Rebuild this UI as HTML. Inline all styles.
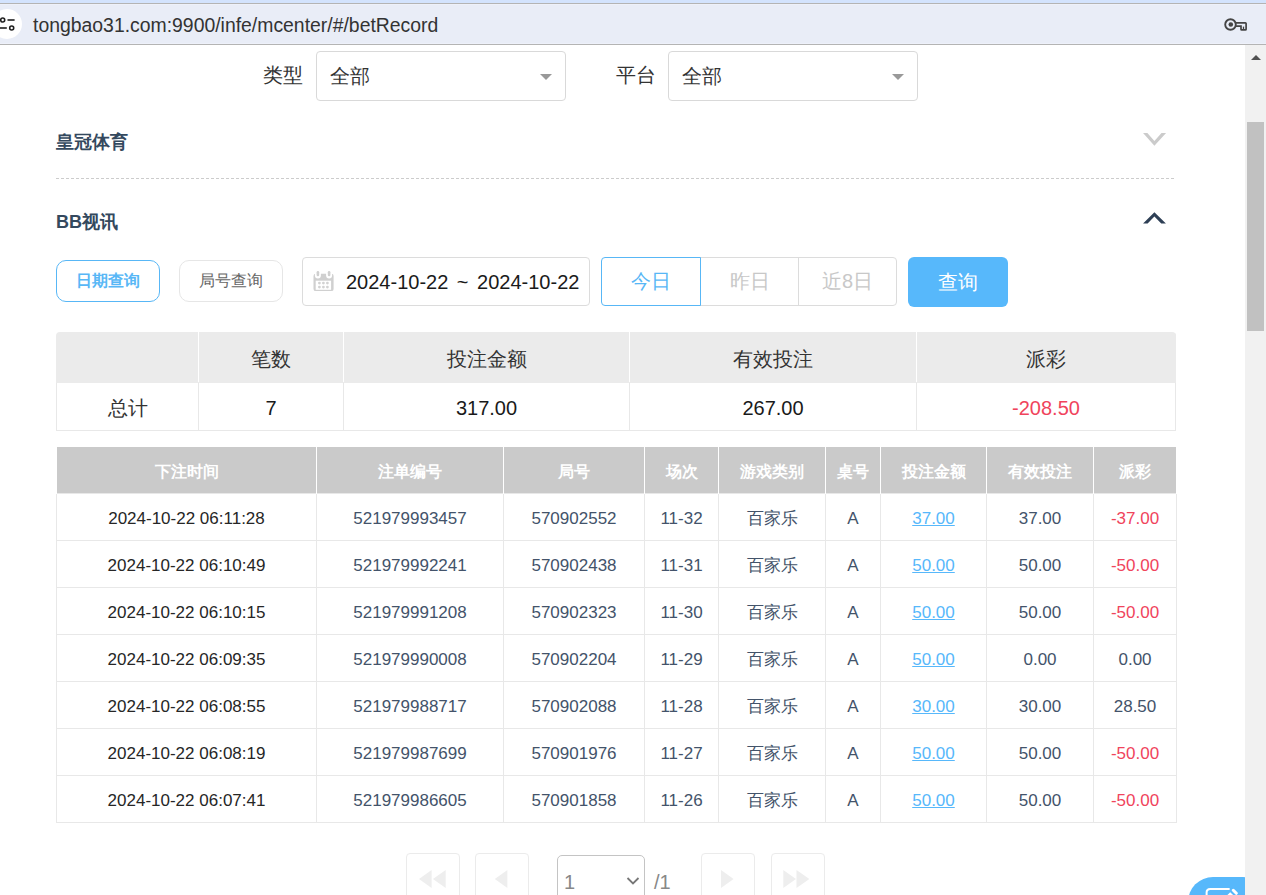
<!DOCTYPE html>
<html><head><meta charset="utf-8">
<style>
*{margin:0;padding:0;box-sizing:border-box}
html,body{width:1266px;height:895px;overflow:hidden;background:#fff;font-family:"Liberation Sans",sans-serif}
.abs{position:absolute}
#topstrip{left:0;top:0;width:1266px;height:3px;background:#d3e3fd}
#bar{left:0;top:3px;width:1266px;height:42px;background:#e9edf7;border-top:1px solid #b4b4b4;border-bottom:1px solid #b4b4b4}
#bar:before{content:"";position:absolute;left:0;right:0;top:0;height:1px;background:#eef1fa}
#bar:after{content:"";position:absolute;left:0;right:0;bottom:0;height:1px;background:#eef1fa}
#url{left:33px;top:13px;font-size:19.4px;color:#333;white-space:nowrap;line-height:24px}
#sb{left:1245px;top:45px;width:21px;height:850px;background:#f1f1f1}
#thumb{left:1247px;top:122px;width:17px;height:209px;background:#c1c1c1}
.lbl{font-size:20px;color:#333;line-height:24px;white-space:nowrap}
.sel{border:1px solid #d9d9d9;border-radius:4px;width:250px;height:50px;background:#fff}
.sel span{position:absolute;left:13px;top:12px;font-size:20px;color:#333;line-height:24px}
.sel i{position:absolute;left:223px;top:22px;width:0;height:0;border-left:6px solid transparent;border-right:6px solid transparent;border-top:6px solid #999}
.title{font-size:18px;font-weight:bold;color:#34495e;line-height:24px;white-space:nowrap}
#dash{left:56px;top:178px;width:1120px;height:1px;background:repeating-linear-gradient(to right,#ccc 0 3px,transparent 3px 5px)}
.btn{border-radius:10px;height:42px;text-align:center;font-size:16px;line-height:40px;white-space:nowrap}
#inp{left:302px;top:257px;width:288px;height:49px;border:1px solid #dcdcdc;border-radius:4px}
#inp span{position:absolute;left:43px;top:12px;font-size:20px;color:#1a1a1a;line-height:24px;white-space:nowrap;word-spacing:3px}
.seg{top:257px;height:49px;border:1px solid #dcdcdc;font-size:20px;color:#c8c8c8;text-align:center;line-height:47px}
#qbtn{left:908px;top:257px;width:100px;height:50px;background:#57b8fb;border-radius:6px;color:#fff;font-size:20px;text-align:center;line-height:50px}
table{border-collapse:collapse;position:absolute}
#sumw{left:56px;top:332px;width:1120px;height:99px;border-radius:4px 4px 0 0;overflow:hidden}
#sum{left:0;top:0;width:1120px}
#sum td{border:1px solid #e8e8e8;text-align:center;font-size:20px;color:#1a1a1a;height:48px}
#sum tr.h td{background:#ebebeb;border-color:#ebebeb #fff #ebebeb #fff;color:#333;height:50px;padding-top:4px}
#sum tr.h td:first-child{border-left-color:#ebebeb}#sum tr.h td:last-child{border-right-color:#ebebeb}
#sum tr.b td{padding-top:3px}
#det{left:56px;top:447px;width:1120px;table-layout:fixed}
#det th{background:#cacaca;color:#fff;font-weight:bold;font-size:16px;height:46px;padding-top:6px;border-left:1px solid #fff;border-right:1px solid #fff}
#det td{border:1px solid #e8e8e8;text-align:center;font-size:17px;color:#43536a;height:47px;padding-top:4px}
#det td.t{color:#262626}
#det td.u{color:#57b8fb;text-decoration:underline}
#det td.r{color:#f0445c}
.pg{top:853px;width:54px;height:60px;border:1px solid #ebebeb;border-radius:4px}
</style></head><body>
<div id="topstrip" class="abs"></div>
<div id="bar" class="abs"></div>
<div class="abs" style="left:-8px;top:8.8px;width:30px;height:30px;border-radius:50%;background:#fff"></div>
<svg class="abs" style="left:0;top:14px" width="20" height="20" viewBox="0 0 20 20">
 <circle cx="2.7" cy="6" r="2" fill="none" stroke="#1f1f1f" stroke-width="1.6"/>
 <line x1="7.5" y1="6" x2="14.6" y2="6" stroke="#1f1f1f" stroke-width="1.6"/>
 <line x1="-1" y1="14" x2="6.8" y2="14" stroke="#1f1f1f" stroke-width="1.6"/>
 <circle cx="11.7" cy="14" r="2" fill="none" stroke="#1f1f1f" stroke-width="1.6"/>
</svg>
<div id="url" class="abs">tongbao31.com:9900/infe/mcenter/#/betRecord</div>
<svg class="abs" style="left:1220px;top:14px" width="32" height="22" viewBox="0 0 32 22">
 <circle cx="10.5" cy="10.5" r="5.3" fill="none" stroke="#444" stroke-width="1.9"/>
 <circle cx="10.8" cy="10.5" r="2.3" fill="#444"/>
 <path d="M15.3 8.9 H25.4 Q26.1 8.9 26.1 9.6 V15.2 Q26.1 15.9 25.4 15.9 H21.7 Q21 15.9 21 15.2 V12.2 H15.3" fill="none" stroke="#444" stroke-width="1.7"/>
 <path d="M23.5 12.6 V15.5" stroke="#444" stroke-width="1.3"/>
</svg>
<div id="sb" class="abs"></div>
<div class="abs" style="left:1251px;top:55px;width:0;height:0;border-left:5px solid transparent;border-right:5px solid transparent;border-bottom:5px solid #505050"></div>
<div id="thumb" class="abs"></div>

<div class="abs lbl" style="left:263px;top:63px">类型</div>
<div class="abs sel" style="left:316px;top:51px"><span>全部</span><i></i></div>
<div class="abs lbl" style="left:616px;top:63px">平台</div>
<div class="abs sel" style="left:668px;top:51px"><span>全部</span><i></i></div>

<div class="abs title" style="left:56px;top:130px">皇冠体育</div>
<svg class="abs" style="left:1138px;top:128px" width="32" height="22" viewBox="0 0 32 22"><polygon points="5.06,5.06 9.35,5.06 16.4,12.9 23.5,5.06 28.06,5.06 16.4,17.7" fill="#cbcbcb"/></svg>
<div id="dash" class="abs"></div>
<div class="abs title" style="left:56px;top:210px">BB视讯</div>
<svg class="abs" style="left:1138px;top:206px" width="32" height="22" viewBox="0 0 32 22"><polygon points="5.06,17.57 16.4,6.2 27.9,17.57 23.25,17.57 16.4,10.5 9.6,17.57" fill="#2e3f55"/></svg>

<div class="abs btn" style="left:56px;top:260px;width:104px;border:1.5px solid #58b7f6;color:#58b7f6;font-weight:bold">日期查询</div>
<div class="abs btn" style="left:179px;top:260px;width:104px;border:1px solid #e6e6e6;color:#666">局号查询</div>
<div id="inp" class="abs">
 <svg class="abs" style="left:5px;top:8px" width="32" height="30" viewBox="0 0 32 30">
  <rect x="5.5" y="7.7" width="20.1" height="17.4" rx="2.2" fill="#d0d0d0"/>
  <rect x="7.7" y="14.7" width="15.4" height="9.1" fill="#fff"/>
  <g fill="#d2d2d2"><circle cx="11.4" cy="17.1" r="1.4"/><circle cx="15.4" cy="17.1" r="1.4"/><circle cx="19.4" cy="17.1" r="1.4"/><circle cx="11.4" cy="21.1" r="1.4"/><circle cx="15.4" cy="21.1" r="1.4"/><circle cx="19.4" cy="21.1" r="1.4"/></g>
  <rect x="6.9" y="3" width="6" height="9.5" rx="3" fill="#fff"/>
  <rect x="18.1" y="3" width="6" height="9.5" rx="3" fill="#fff"/>
  <rect x="8.6" y="5" width="2.6" height="5.3" rx="1.3" fill="#d0d0d0"/>
  <rect x="19.8" y="5" width="2.6" height="5.3" rx="1.3" fill="#d0d0d0"/>
 </svg>
 <span>2024-10-22 ~ 2024-10-22</span>
</div>
<div class="abs seg" style="left:700px;width:99px;border-right:none">昨日</div>
<div class="abs seg" style="left:798px;width:99px;border-radius:0 4px 4px 0">近8日</div>
<div class="abs seg" style="left:601px;width:100px;border:1px solid #58b7f6;color:#58b7f6;border-radius:4px 0 0 4px">今日</div>
<div id="qbtn" class="abs">查询</div>

<div id="sumw" class="abs"><table id="sum">
 <colgroup><col style="width:142px"><col style="width:145px"><col style="width:286px"><col style="width:287px"><col></colgroup>
 <tr class="h"><td></td><td>笔数</td><td>投注金额</td><td>有效投注</td><td>派彩</td></tr>
 <tr class="b"><td style="color:#333">总计</td><td>7</td><td>317.00</td><td>267.00</td><td style="color:#f0445c">-208.50</td></tr>
</table></div>

<table id="det">
 <colgroup><col style="width:260px"><col style="width:187px"><col style="width:141px"><col style="width:74px"><col style="width:107px"><col style="width:55px"><col style="width:106px"><col style="width:107px"><col style="width:83px"></colgroup>
 <tr><th>下注时间</th><th>注单编号</th><th>局号</th><th>场次</th><th>游戏类别</th><th>桌号</th><th>投注金额</th><th>有效投注</th><th>派彩</th></tr>
 <tr><td class="t">2024-10-22 06:11:28</td><td>521979993457</td><td>570902552</td><td>11-32</td><td>百家乐</td><td>A</td><td class="u">37.00</td><td>37.00</td><td class="r">-37.00</td></tr>
 <tr><td class="t">2024-10-22 06:10:49</td><td>521979992241</td><td>570902438</td><td>11-31</td><td>百家乐</td><td>A</td><td class="u">50.00</td><td>50.00</td><td class="r">-50.00</td></tr>
 <tr><td class="t">2024-10-22 06:10:15</td><td>521979991208</td><td>570902323</td><td>11-30</td><td>百家乐</td><td>A</td><td class="u">50.00</td><td>50.00</td><td class="r">-50.00</td></tr>
 <tr><td class="t">2024-10-22 06:09:35</td><td>521979990008</td><td>570902204</td><td>11-29</td><td>百家乐</td><td>A</td><td class="u">50.00</td><td>0.00</td><td>0.00</td></tr>
 <tr><td class="t">2024-10-22 06:08:55</td><td>521979988717</td><td>570902088</td><td>11-28</td><td>百家乐</td><td>A</td><td class="u">30.00</td><td>30.00</td><td>28.50</td></tr>
 <tr><td class="t">2024-10-22 06:08:19</td><td>521979987699</td><td>570901976</td><td>11-27</td><td>百家乐</td><td>A</td><td class="u">50.00</td><td>50.00</td><td class="r">-50.00</td></tr>
 <tr><td class="t">2024-10-22 06:07:41</td><td>521979986605</td><td>570901858</td><td>11-26</td><td>百家乐</td><td>A</td><td class="u">50.00</td><td>50.00</td><td class="r">-50.00</td></tr>
</table>

<div class="abs pg" style="left:406px"></div>
<div class="abs pg" style="left:475px"></div>
<div class="abs pg" style="left:701px"></div>
<div class="abs pg" style="left:771px"></div>
<div class="abs" style="left:557px;top:855px;width:88px;height:60px;border:1px solid #c4c4c4;border-radius:5px"></div>
<div class="abs" style="left:564px;top:870px;font-size:20px;color:#888;line-height:24px">1</div>
<svg class="abs" style="left:626px;top:876px" width="14" height="10" viewBox="0 0 14 10"><path d="M1.5 2 L7 7.5 L12.5 2" fill="none" stroke="#777" stroke-width="1.8"/></svg>
<div class="abs" style="left:654px;top:870px;font-size:20px;color:#888;line-height:24px">/1</div>
<svg class="abs" style="left:406px;top:853px" width="420" height="42" viewBox="0 0 420 42">
 <g fill="#eee">
  <path d="M13 26 L25.6 17 V35 Z"/><path d="M26.9 26 L39.7 17 V35 Z"/>
  <path d="M88.8 26 L101.4 17 V35 Z"/>
  <path d="M315 17 V35 L327.6 26 Z"/>
  <path d="M377.3 17 V35 L390 26 Z"/><path d="M390.5 17 V35 L403.4 26 Z"/>
 </g>
</svg>
<div class="abs" style="left:1188px;top:877px;width:80px;height:50px;border-radius:25px;background:#57b8fb"></div>
<svg class="abs" style="left:1188px;top:877px" width="57" height="18" viewBox="0 0 57 18">
 <path d="M40.9 12.1 H22.2 Q18.6 12.1 18.6 15.7 V30" fill="none" stroke="#fff" stroke-width="2" stroke-linecap="round"/>
 <path d="M45.3 13.3 L48.3 16.3" stroke="#fff" stroke-width="3" stroke-linecap="round"/>
 <path d="M44.5 17.4 L30 32" stroke="#fff" stroke-width="6.4"/>
</svg>
<div class="abs" style="left:1245px;top:845px;width:21px;height:50px;background:#f1f1f1"></div>
</body></html>
